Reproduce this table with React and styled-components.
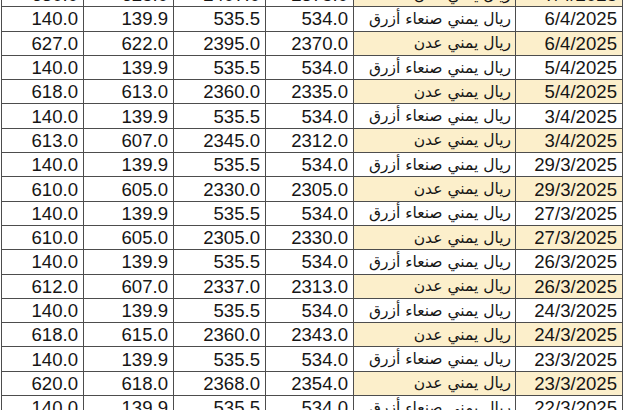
import React from "react";
import styled, { createGlobalStyle } from "styled-components";

const GlobalStyle = createGlobalStyle`
  html, body {
    margin: 0;
    padding: 0;
    background: #ffffff;
  }
  body {
    width: 630px;
    height: 410px;
    overflow: hidden;
  }
`;

const Sheet = styled.div`
  width: 630px;
  height: 410px;
  overflow: hidden;
  padding-left: 1px;
  box-sizing: border-box;
`;

const Table = styled.table`
  border-collapse: collapse;
  table-layout: fixed;
  width: 621px;
  margin-top: -18px;
  font-family: "Liberation Sans", Arial, sans-serif;
  font-size: 18.6px;
  color: #161616;
`;

const Row = styled.tr`
  height: 24.3px;
`;

const Cell = styled.td`
  border: 1.5px solid #4d4d4d;
  padding: 1px 5px 0 0;
  text-align: right;
  white-space: nowrap;
  overflow: hidden;
  line-height: 20px;
  background: ${(p) => (p.$hl ? "#fcefcb" : "#ffffff")};
`;

const NameCell = styled(Cell)`
  font-family: "DejaVu Sans", "Noto Sans", sans-serif;
  font-size: 15.5px;
  direction: rtl;
  text-align: right;
  padding: 0 4px 0 0;
`;

const SANAA = "ريال يمني صنعاء أزرق";
const ADEN = "ريال يمني عدن";

const sanaa = (date) => ({ v: ["140.0", "139.9", "535.5", "534.0"], name: SANAA, date, aden: false });
const aden = (v, date) => ({ v, name: ADEN, date, aden: true });

const rows = [
  aden(["630.0", "625.0", "2407.0", "2375.0"], "7/4/2025"),
  sanaa("6/4/2025"),
  aden(["627.0", "622.0", "2395.0", "2370.0"], "6/4/2025"),
  sanaa("5/4/2025"),
  aden(["618.0", "613.0", "2360.0", "2335.0"], "5/4/2025"),
  sanaa("3/4/2025"),
  aden(["613.0", "607.0", "2345.0", "2312.0"], "3/4/2025"),
  sanaa("29/3/2025"),
  aden(["610.0", "605.0", "2330.0", "2305.0"], "29/3/2025"),
  sanaa("27/3/2025"),
  aden(["610.0", "605.0", "2305.0", "2330.0"], "27/3/2025"),
  sanaa("26/3/2025"),
  aden(["612.0", "607.0", "2337.0", "2313.0"], "26/3/2025"),
  sanaa("24/3/2025"),
  aden(["618.0", "615.0", "2360.0", "2343.0"], "24/3/2025"),
  sanaa("23/3/2025"),
  aden(["620.0", "618.0", "2368.0", "2354.0"], "23/3/2025"),
  sanaa("22/3/2025"),
];

const widths = [82, 90, 92, 88, 162, 107];

export default function App() {
  return (
    <>
      <GlobalStyle />
      <Sheet>
        <Table>
          <colgroup>
            {widths.map((w, i) => (
              <col key={i} style={{ width: w }} />
            ))}
          </colgroup>
          <tbody>
            {rows.map((r, i) => (
              <Row key={i}>
                {r.v.map((n, j) => (
                  <Cell key={j}>{n}</Cell>
                ))}
                <NameCell $hl={r.aden}>{r.name}</NameCell>
                <Cell $hl={r.aden}>{r.date}</Cell>
              </Row>
            ))}
          </tbody>
        </Table>
      </Sheet>
    </>
  );
}
